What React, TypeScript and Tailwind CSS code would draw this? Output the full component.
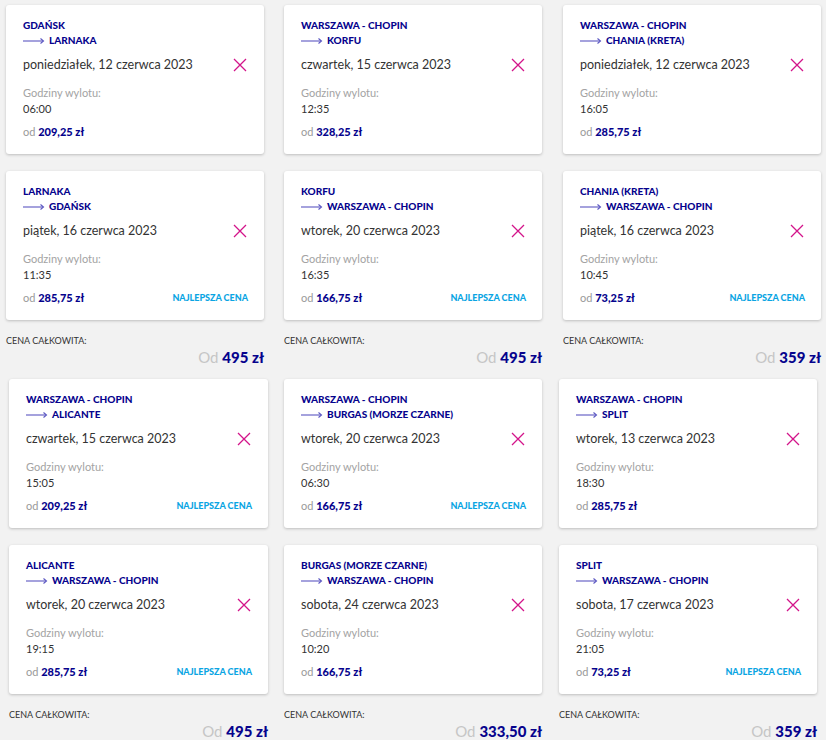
import React from "react";

type Flight = {
  from: string;
  to: string;
  date: string;
  time: string;
  price: string;
  best?: boolean;
};

type Column = { flights: Flight[]; total: string };

const groups: { cols: Column[]; pad: string; gap: string; widths: string[] }[] = [
  {
    pad: "pl-[6px] pt-[5px]",
    gap: "gap-x-[20px]",
    widths: ["w-[258px]", "w-[258px] mr-[1px]", "w-[258px]"],
    cols: [
      {
        total: "495 zł",
        flights: [
          { from: "GDAŃSK", to: "LARNAKA", date: "poniedziałek, 12 czerwca 2023", time: "06:00", price: "209,25 zł" },
          { from: "LARNAKA", to: "GDAŃSK", date: "piątek, 16 czerwca 2023", time: "11:35", price: "285,75 zł", best: true },
        ],
      },
      {
        total: "495 zł",
        flights: [
          { from: "WARSZAWA - CHOPIN", to: "KORFU", date: "czwartek, 15 czerwca 2023", time: "12:35", price: "328,25 zł" },
          { from: "KORFU", to: "WARSZAWA - CHOPIN", date: "wtorek, 20 czerwca 2023", time: "16:35", price: "166,75 zł", best: true },
        ],
      },
      {
        total: "359 zł",
        flights: [
          { from: "WARSZAWA - CHOPIN", to: "CHANIA (KRETA)", date: "poniedziałek, 12 czerwca 2023", time: "16:05", price: "285,75 zł" },
          { from: "CHANIA (KRETA)", to: "WARSZAWA - CHOPIN", date: "piątek, 16 czerwca 2023", time: "10:45", price: "73,25 zł", best: true },
        ],
      },
    ],
  },
  {
    pad: "pl-[9px] pt-[12px]",
    gap: "gap-x-[16px]",
    widths: ["w-[259px]", "w-[258px] mr-[1px]", "w-[258px]"],
    cols: [
      {
        total: "495 zł",
        flights: [
          { from: "WARSZAWA - CHOPIN", to: "ALICANTE", date: "czwartek, 15 czerwca 2023", time: "15:05", price: "209,25 zł", best: true },
          { from: "ALICANTE", to: "WARSZAWA - CHOPIN", date: "wtorek, 20 czerwca 2023", time: "19:15", price: "285,75 zł", best: true },
        ],
      },
      {
        total: "333,50 zł",
        flights: [
          { from: "WARSZAWA - CHOPIN", to: "BURGAS (MORZE CZARNE)", date: "wtorek, 20 czerwca 2023", time: "06:30", price: "166,75 zł", best: true },
          { from: "BURGAS (MORZE CZARNE)", to: "WARSZAWA - CHOPIN", date: "sobota, 24 czerwca 2023", time: "10:20", price: "166,75 zł" },
        ],
      },
      {
        total: "359 zł",
        flights: [
          { from: "WARSZAWA - CHOPIN", to: "SPLIT", date: "wtorek, 13 czerwca 2023", time: "18:30", price: "285,75 zł" },
          { from: "SPLIT", to: "WARSZAWA - CHOPIN", date: "sobota, 17 czerwca 2023", time: "21:05", price: "73,25 zł", best: true },
        ],
      },
    ],
  },
];

const Arrow = () => (
  <svg width="22" height="8" viewBox="0 0 22 8" className="mr-[4px] shrink-0">
    <line x1="0" y1="4" x2="20" y2="4" stroke="#5b57c2" strokeWidth="1.1" />
    <path d="M17.5 1.5 L20.5 4 L17.5 6.5" fill="none" stroke="#5b57c2" strokeWidth="1.1" />
  </svg>
);

const Close = () => (
  <svg width="14" height="14" viewBox="0 0 14 14" className="shrink-0">
    <path d="M1 1 L13 13 M13 1 L1 13" stroke="#d3148a" strokeWidth="1.3" />
  </svg>
);

const Card = ({ f }: { f: Flight }) => (
  <div className="rounded-[3px] bg-white pl-[17px] pr-[16px] pt-[13px] pb-[15px] shadow-[0_1px_3px_rgba(0,0,0,0.22)]">
    <div className="text-[10px] font-black leading-[15px] text-[#06038d]">{f.from}</div>
    <div className="flex items-center text-[10px] font-black leading-[15px] text-[#06038d]">
      <Arrow />
      {f.to}
    </div>
    <div className="mt-[7px] flex items-center justify-between">
      <span className="text-[12.5px] leading-[20px] text-[#333]">{f.date}</span>
      <span className="mr-[1px]">
        <Close />
      </span>
    </div>
    <div className="mt-[10px] text-[11px] leading-[15px] text-[#a3a3a3]">Godziny wylotu:</div>
    <div className="mt-[1px] text-[11px] leading-[15px] text-[#333]">{f.time}</div>
    <div className="mt-[8px] flex items-center justify-between leading-[15px]">
      <span className="text-[11px]">
        <span className="text-[#9a9a9a]">od </span>
        <span className="font-black text-[#06038d]">{f.price}</span>
      </span>
      {f.best && <span className="text-[9px] font-black text-[#0aa5e3]">NAJLEPSZA CENA</span>}
    </div>
  </div>
);

const App = () => {
  return (
    <div
      className="h-[740px] w-[826px] overflow-hidden bg-[#f2f2f2]"
      style={{ fontFamily: "Lato, 'Open Sans', sans-serif" }}
    >
      {groups.map((g, gi) => (
        <div key={gi} className={`flex ${g.pad} ${g.gap}`}>
          {g.cols.map((c, ci) => (
            <div key={ci} className={`flex flex-col ${g.widths[ci]}`}>
              <Card f={c.flights[0]} />
              <div className="h-[17px]" />
              <Card f={c.flights[1]} />
              <div className="mt-[15px] text-[9px] leading-[12px] text-[#333]">CENA CAŁKOWITA:</div>
              <div className="text-right text-[15px] leading-[20px]">
                <span className="text-[#c6c6c6]">Od </span>
                <span className="font-black text-[#06038d]">{c.total}</span>
              </div>
            </div>
          ))}
        </div>
      ))}
    </div>
  );
};

export default App;
